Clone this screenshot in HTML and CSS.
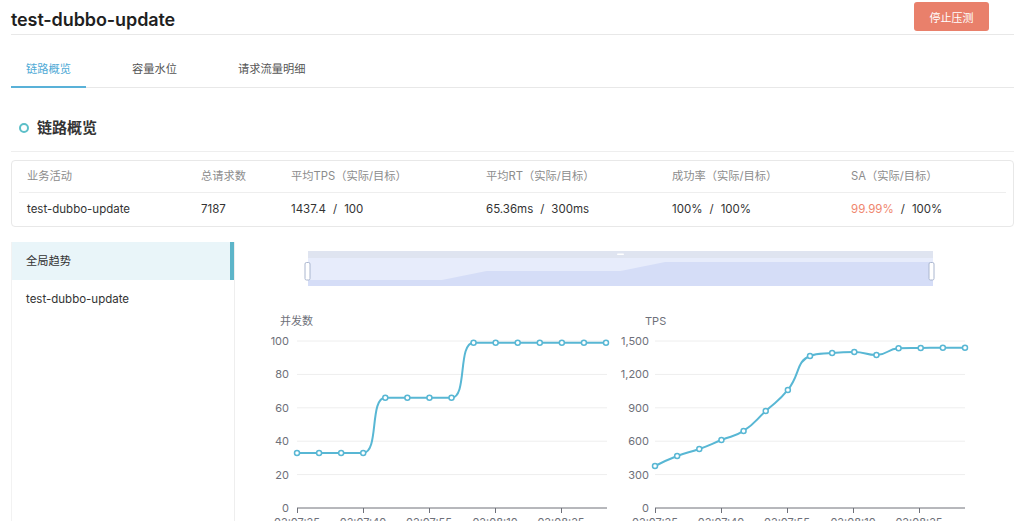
FILE: index.html
```html
<!DOCTYPE html>
<html lang="zh-CN">
<head>
<meta charset="utf-8">
<title>test-dubbo-update</title>
<link rel="stylesheet" href="styles.css">
</head>
<body>
<div class="page">
  <header class="header">
    <h1 class="title">test-dubbo-update</h1>
    <button class="btn-stop" type="button">停止压测</button>
  </header>

  <nav class="tabs">
    <div class="tab active">链路概览</div>
    <div class="tab">容量水位</div>
    <div class="tab">请求流量明细</div>
  </nav>

  <div class="section-head">
    <span class="dot"></span>
    <h2 class="section-title">链路概览</h2>
  </div>

  <div class="summary">
    <div class="row row-head">
      <div class="cell">业务活动</div>
      <div class="cell">总请求数</div>
      <div class="cell">平均TPS（实际/目标）</div>
      <div class="cell">平均RT（实际/目标）</div>
      <div class="cell">成功率（实际/目标）</div>
      <div class="cell">SA（实际/目标）</div>
    </div>
    <div class="row row-body">
      <div class="cell">test-dubbo-update</div>
      <div class="cell">7187</div>
      <div class="cell">1437.4<span class="sep">/</span>100</div>
      <div class="cell">65.36ms<span class="sep">/</span>300ms</div>
      <div class="cell">100%<span class="sep">/</span>100%</div>
      <div class="cell"><span class="warn">99.99%</span><span class="sep">/</span>100%</div>
    </div>
  </div>

  <div class="lower">
    <aside class="side">
      <div class="side-item active">全局趋势</div>
      <div class="side-item">test-dubbo-update</div>
    </aside>

    <main class="main">
      <svg class="datazoom" width="640" height="38" viewBox="0 0 640 38">
        <rect x="8" y="1" width="625" height="7" fill="#dfe4f0"/>
        <rect x="317" y="3.5" width="7" height="1.5" rx="0.75" fill="#ffffff"/>
        <rect x="8" y="8" width="625" height="28" fill="#e7ecfb"/>
        <path id="zoomArea" fill="#d5ddf7" d=""/>
        <rect x="5" y="12.5" width="5" height="17.5" rx="1.5" fill="#ffffff" stroke="#aab6cf" stroke-width="1"/>
        <rect x="629" y="12.5" width="5" height="17.5" rx="1.5" fill="#ffffff" stroke="#aab6cf" stroke-width="1"/>
      </svg>

      <div class="charts">
        <svg class="chart" width="375" height="230" viewBox="0 0 375 230">
          <text class="ch-title" x="35" y="25">并发数</text>
          <g class="grid">
            <line x1="52" y1="41" x2="362" y2="41"/>
            <line x1="52" y1="74.4" x2="362" y2="74.4"/>
            <line x1="52" y1="107.8" x2="362" y2="107.8"/>
            <line x1="52" y1="141.2" x2="362" y2="141.2"/>
            <line x1="52" y1="174.6" x2="362" y2="174.6"/>
          </g>
          <g class="ylab">
            <text x="44" y="45">100</text>
            <text x="44" y="78.4">80</text>
            <text x="44" y="111.8">60</text>
            <text x="44" y="145.2">40</text>
            <text x="44" y="178.6">20</text>
            <text x="44" y="212">0</text>
          </g>
          <g class="axis">
            <line x1="52" y1="208" x2="362" y2="208"/>
            <line x1="52.5" y1="208" x2="52.5" y2="213"/>
            <line x1="118.5" y1="208" x2="118.5" y2="213"/>
            <line x1="184.5" y1="208" x2="184.5" y2="213"/>
            <line x1="250.5" y1="208" x2="250.5" y2="213"/>
            <line x1="316.5" y1="208" x2="316.5" y2="213"/>
          </g>
          <g class="xlab">
            <text x="52" y="226">02:07:25</text>
            <text x="118" y="226">02:07:40</text>
            <text x="184" y="226">02:07:55</text>
            <text x="250" y="226">02:08:10</text>
            <text x="316" y="226">02:08:25</text>
          </g>
          <path id="line1" class="line" d=""/>
          <g id="pts1" class="pts"></g>
        </svg>

        <svg class="chart" width="393" height="230" viewBox="0 0 393 230">
          <text class="ch-title" x="25" y="25">TPS</text>
          <g class="grid">
            <line x1="35" y1="41" x2="345" y2="41"/>
            <line x1="35" y1="74.4" x2="345" y2="74.4"/>
            <line x1="35" y1="107.8" x2="345" y2="107.8"/>
            <line x1="35" y1="141.2" x2="345" y2="141.2"/>
            <line x1="35" y1="174.6" x2="345" y2="174.6"/>
          </g>
          <g class="ylab">
            <text x="29" y="45">1,500</text>
            <text x="29" y="78.4">1,200</text>
            <text x="29" y="111.8">900</text>
            <text x="29" y="145.2">600</text>
            <text x="29" y="178.6">300</text>
            <text x="29" y="212">0</text>
          </g>
          <g class="axis">
            <line x1="35" y1="208" x2="345" y2="208"/>
            <line x1="35.5" y1="208" x2="35.5" y2="213"/>
            <line x1="101.5" y1="208" x2="101.5" y2="213"/>
            <line x1="167.5" y1="208" x2="167.5" y2="213"/>
            <line x1="233.5" y1="208" x2="233.5" y2="213"/>
            <line x1="299.5" y1="208" x2="299.5" y2="213"/>
          </g>
          <g class="xlab">
            <text x="35" y="226">02:07:25</text>
            <text x="101" y="226">02:07:40</text>
            <text x="167" y="226">02:07:55</text>
            <text x="233" y="226">02:08:10</text>
            <text x="299" y="226">02:08:25</text>
          </g>
          <path id="line2" class="line" d=""/>
          <g id="pts2" class="pts"></g>
        </svg>
      </div>
    </main>
  </div>
</div>
<script src="script.js"></script>
</body>
</html>
```

FILE: styles.css
```css
html, body {
  margin: 0;
  height: 100%;
  overflow: hidden;
  background: #ffffff;
}

body {
  font-family: "Inter", "Noto Sans CJK SC", sans-serif;
  font-size: 11.5px;
  color: #333333;
}

.page {
  padding: 0 10px 0 11px;
}

/* header */
.header {
  height: 34px;
  border-bottom: 1px solid #e8e8e8;
  display: flex;
  align-items: center;
  justify-content: space-between;
}

.title {
  margin: 0;
  padding-top: 4px;
  font-size: 18px;
  font-weight: 600;
  color: #1f1f1f;
  letter-spacing: -0.1px;
}

.btn-stop {
  align-self: flex-start;
  margin: 2px 25px 0 0;
  width: 75px;
  height: 29px;
  border: 0;
  border-radius: 3px;
  background: #e9806b;
  color: #ffffff;
  font-family: inherit;
  font-size: 11px;
  padding: 0;
}

/* tabs */
.tabs {
  display: flex;
  height: 52px;
  border-bottom: 1px solid #e8e8e8;
}

.tab {
  position: relative;
  padding: 25px 15px 0;
  margin-right: 31px;
  line-height: 18px;
  font-size: 11.25px;
  color: #555555;
}

.tab.active {
  color: #4faad6;
}

.tab.active::after {
  content: "";
  position: absolute;
  left: 0;
  right: 0;
  bottom: -1px;
  height: 2px;
  background: #59b1d8;
}

/* section head */
.section-head {
  height: 63px;
  border-bottom: 1px solid #eeeeee;
  display: flex;
  align-items: flex-start;
}

.dot {
  box-sizing: border-box;
  width: 10px;
  height: 10px;
  margin: 35px 8px 0 8px;
  border: 2px solid #5cbfc8;
  border-radius: 50%;
}

.section-title {
  margin: 31px 0 0;
  font-size: 15px;
  line-height: 18px;
  font-weight: 700;
  color: #333333;
}

/* summary table */
.summary {
  margin-top: 8px;
  border: 1px solid #e8e8e8;
  border-radius: 4px;
  padding: 0 7px;
}

.row {
  display: grid;
  grid-template-columns: 174px 90px 195px 186px 179px 1fr;
}

.cell {
  padding-left: 8px;
  white-space: nowrap;
}

.row-head {
  height: 31px;
  line-height: 31px;
  color: #8c8c8c;
  font-size: 11.25px;
  border-bottom: 1px solid #eeeeee;
}

.row-body {
  height: 33px;
  line-height: 33px;
  color: #333333;
}

.sep {
  margin: 0 7px;
}

.warn {
  color: #ef866e;
}

/* lower area */
.lower {
  display: flex;
  margin-top: 15px;
}

.side {
  flex: none;
  width: 222px;
  height: 300px;
  border-left: 1px solid #f2f2f2;
  border-right: 1px solid #eeeeee;
}

.side-item {
  height: 38px;
  line-height: 38px;
  padding-left: 14px;
  color: #333333;
}

.side-item.active {
  background: #e9f5f9;
  border-right: 4px solid #5db5c9;
  font-size: 11.25px;
}

.main {
  flex: 1;
  min-width: 0;
}

.datazoom {
  display: block;
  margin: 8px 0 0 65px;
}

.charts {
  display: flex;
  margin-top: 12px;
  padding-left: 10px;
}

.chart {
  display: block;
  flex: none;
}

.chart text {
  font-family: "Inter", "Noto Sans CJK SC", sans-serif;
  font-size: 11px;
  fill: #6e7079;
}

.ch-title {
  font-size: 11px;
}

.ylab text {
  text-anchor: end;
}

.xlab text {
  text-anchor: middle;
}

.grid line {
  stroke: #eeeeee;
  stroke-width: 1;
}

.axis line {
  stroke: #6e7079;
  stroke-width: 1;
}

.line {
  fill: none;
  stroke: #58b7d4;
  stroke-width: 2;
}

.pts circle {
  fill: #ffffff;
  stroke: #58b7d4;
  stroke-width: 1.5;
}
```

FILE: script.js
```js
(function () {
  var NS = 'http://www.w3.org/2000/svg';

  function clamp(v, a, b) {
    var lo = Math.min(a, b), hi = Math.max(a, b);
    return Math.min(Math.max(v, lo), hi);
  }

  function smoothPath(pts, smooth) {
    var d = 'M' + pts[0][0] + ',' + pts[0][1];
    var cpx0 = pts[0][0], cpy0 = pts[0][1];
    for (var i = 1; i < pts.length; i++) {
      var x = pts[i][0], y = pts[i][1];
      var cpx1, cpy1, nx = x, ny = y;
      if (i < pts.length - 1) {
        var px = pts[i - 1][0], py = pts[i - 1][1];
        var qx = pts[i + 1][0], qy = pts[i + 1][1];
        var vx = qx - px, vy = qy - py;
        var lp = Math.hypot(x - px, y - py), ln = Math.hypot(qx - x, qy - y);
        var r = ln / (ln + lp);
        nx = clamp(x + vx * smooth * r, x, qx);
        ny = clamp(y + vy * smooth * r, y, qy);
        vx = nx - x; vy = ny - y;
        cpx1 = clamp(x - vx * lp / ln, px, x);
        cpy1 = clamp(y - vy * lp / ln, py, y);
        vx = x - cpx1; vy = y - cpy1;
        nx = x + vx * ln / lp;
        ny = y + vy * ln / lp;
      } else {
        cpx1 = x; cpy1 = y;
      }
      d += ' C' + cpx0.toFixed(2) + ',' + cpy0.toFixed(2) + ' ' + cpx1.toFixed(2) + ',' + cpy1.toFixed(2) + ' ' + x.toFixed(2) + ',' + y.toFixed(2);
      cpx0 = nx; cpy0 = ny;
    }
    return d;
  }

  function build(lineId, ptsId, data, x0, x1, yBottom, yTop, vMax) {
    var step = (x1 - x0) / (data.length - 1);
    var pts = data.map(function (v, i) {
      return [x0 + i * step, yBottom - (v / vMax) * (yBottom - yTop)];
    });
    document.getElementById(lineId).setAttribute('d', smoothPath(pts, 0.5));
    var g = document.getElementById(ptsId);
    pts.forEach(function (p) {
      var c = document.createElementNS(NS, 'circle');
      c.setAttribute('cx', p[0]);
      c.setAttribute('cy', p[1]);
      c.setAttribute('r', 2.5);
      g.appendChild(c);
    });
  }

  var concurrency = [33, 33, 33, 33, 66, 66, 66, 66, 99, 99, 99, 99, 99, 99, 99];
  var tps = [377, 467, 530, 611, 692, 871, 1060, 1365, 1392, 1401, 1374, 1434, 1437, 1440, 1440];

  build('line1', 'pts1', concurrency, 52, 361, 208, 41, 100);
  build('line2', 'pts2', tps, 35, 345, 208, 41, 1500);

  var zx0 = 8, zx1 = 633, zStep = (zx1 - zx0) / (concurrency.length - 1);
  var d = 'M' + zx0 + ',36';
  concurrency.forEach(function (v, i) {
    d += ' L' + (zx0 + i * zStep).toFixed(2) + ',' + (39 - v * 9 / 33).toFixed(2);
  });
  d += ' L' + zx1 + ',36 Z';
  document.getElementById('zoomArea').setAttribute('d', d);
})();
```
